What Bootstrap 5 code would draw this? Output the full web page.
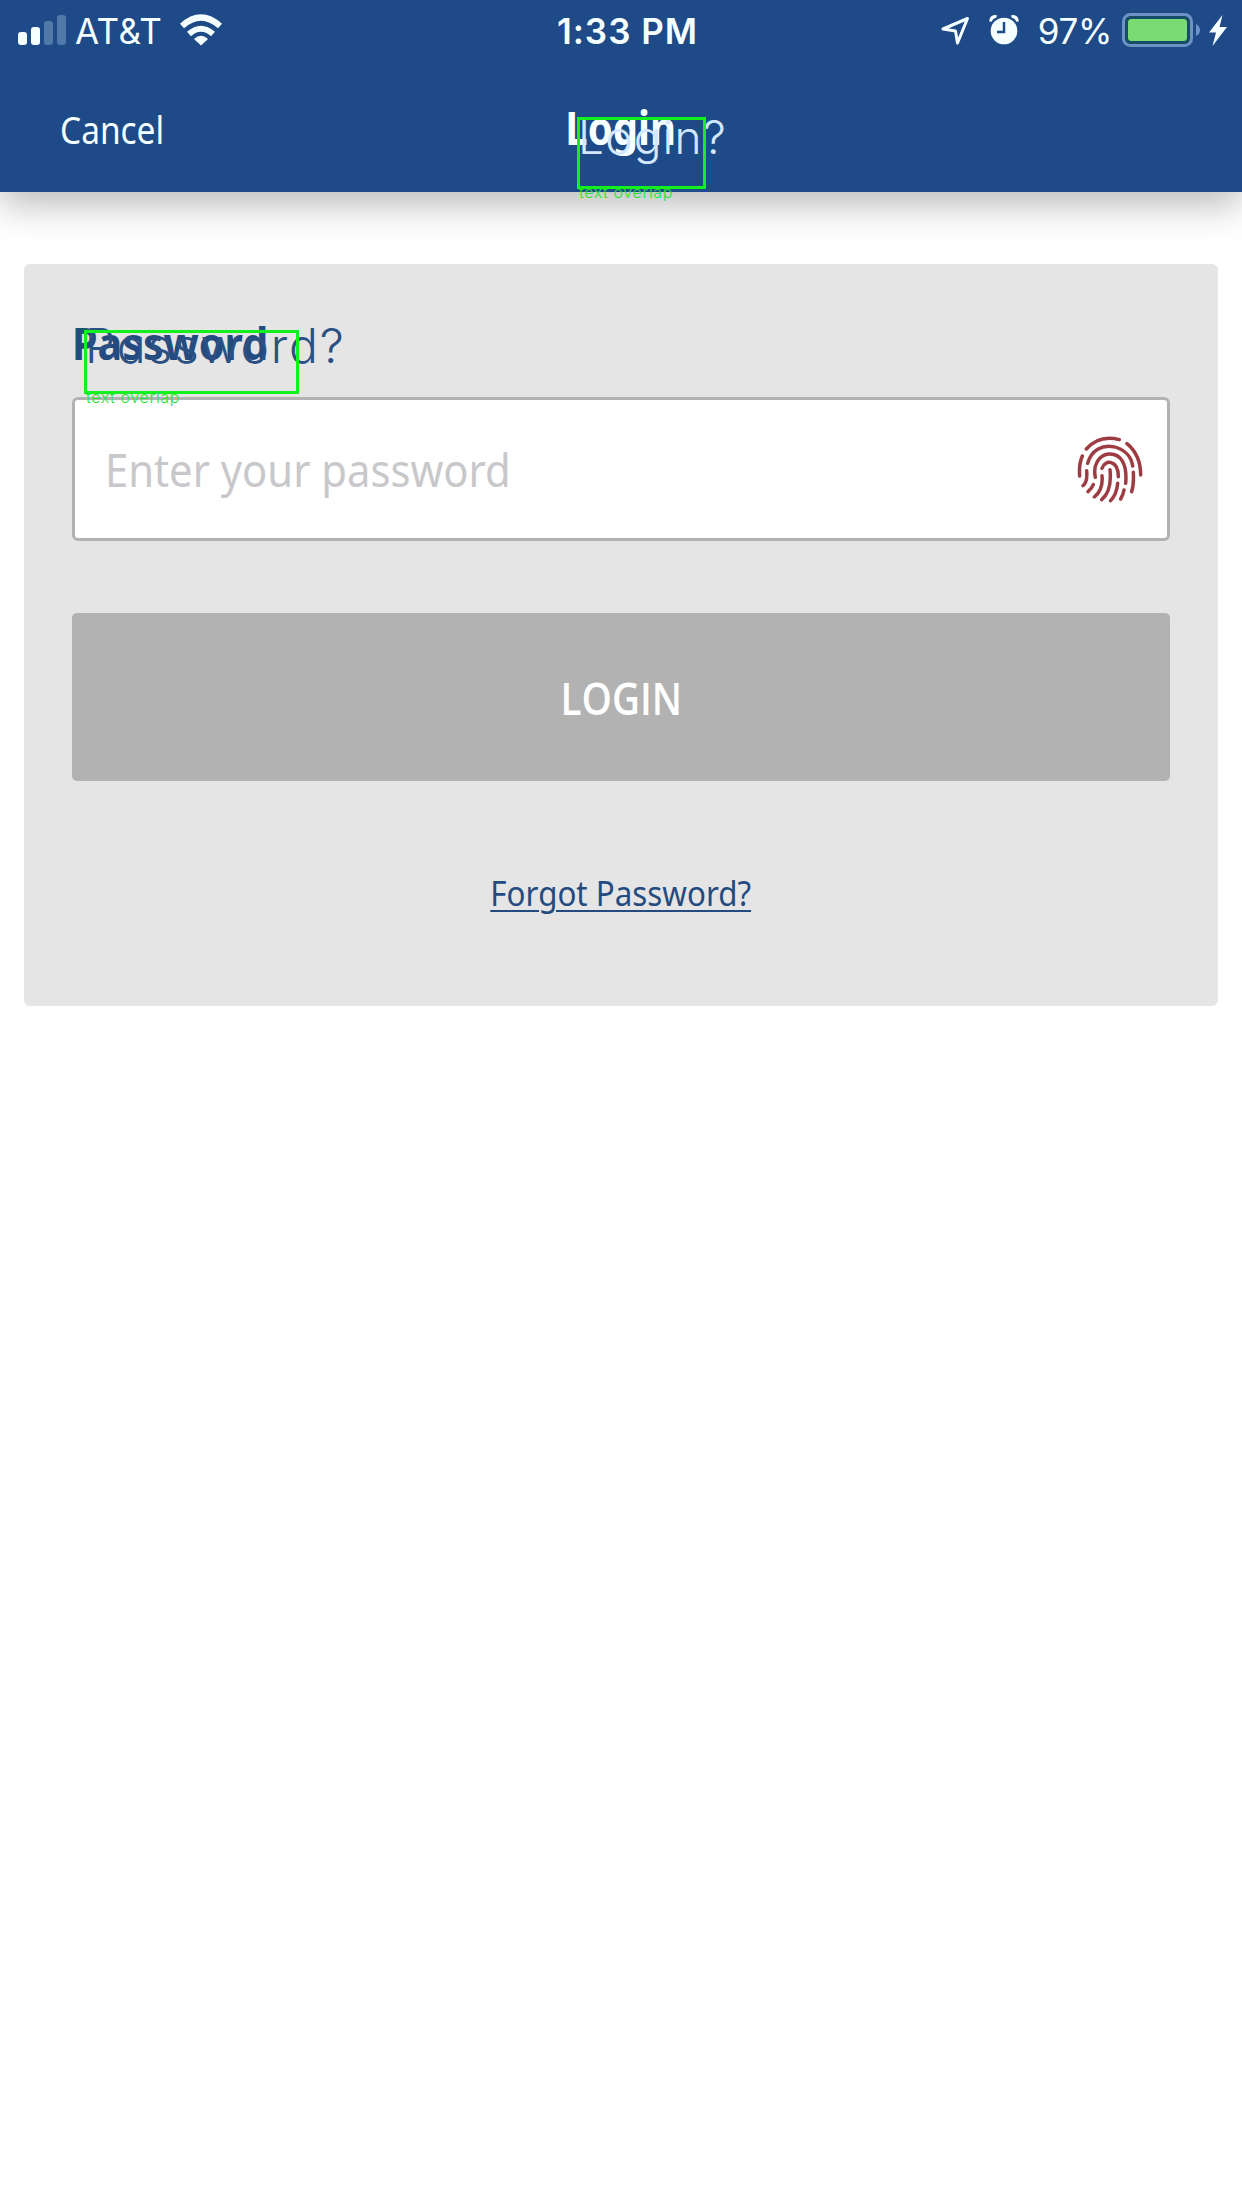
<!DOCTYPE html>
<html lang="en">
<head>
<meta charset="utf-8">
<meta name="viewport" content="width=device-width, initial-scale=1">
<title>Login</title>
<link href="https://cdn.jsdelivr.net/npm/bootstrap@5.3.0/dist/css/bootstrap.min.css" rel="stylesheet">
<style>
body{font-family:"Noto Sans",sans-serif;background:#fff;min-height:2208px;overflow-x:hidden}
.app-head{height:192px;background:#1e4a87;color:#f5ffff;box-shadow:0 12px 36px rgba(0,0,0,.28)}
.status{height:62px;font-family:Inter,sans-serif;font-size:35px;line-height:62px;padding:0 14px 0 17px}
.side{flex:1 1 0}
.carrier{margin:0 17px 0 8px;letter-spacing:.4px}
.pct{margin:0 10px 0 18px;letter-spacing:-.3px}
.clock{font-weight:600;letter-spacing:1px;margin:0 -5px 0 5px}
.titlebar{height:130px;line-height:130px}
.squeeze{display:inline-block;white-space:nowrap}
.cancel{font-size:38px;padding:2px 0 0 60px;transform:scaleX(.88);transform-origin:60px 50%}
.page-title{font-size:46px;font-weight:700;transform:scaleX(.87)}
.panel{margin:72px 24px 0;height:742px;padding:48px;background:#e5e5e5;border:0;border-radius:6px}
.field-label{height:61px;line-height:61px;font-size:45px;font-weight:700;color:#244b80;margin-bottom:24px;transform:scaleX(.915);transform-origin:0 50%}
.pass-field{height:144px;border:3px solid #b2b2b2;border-radius:6px;padding:0 21px 0 30px;background:#fff}
.hint{font-size:46px;color:#c8c8cb;transform:scaleX(.908);transform-origin:0 50%}
.login-btn{margin-top:72px;height:168px;background:#b2b2b2;color:#fff;border:0;border-radius:5px;font:600 46px "Open Sans",sans-serif}
.login-btn span{transform:scaleX(.84)}
.forgot{margin-top:82px;height:60px;line-height:60px;font-size:35px;color:#244b80;transform:scaleX(.895);text-underline-offset:4px;text-decoration-thickness:2px}
.ghost,.flag{position:absolute;z-index:5;white-space:nowrap}
.ghost{font-family:Inter,sans-serif;font-weight:300;font-feature-settings:"cv11","ss03";line-height:60px}
.ghost-title{left:578px;top:107px;font-size:46px;color:#d3e7ff;letter-spacing:1.2px}
.ghost-label{left:85px;top:316px;font-size:48px;color:#2b5083;letter-spacing:1.8px}
.flag{border:3px solid #13f01d}
.flag span{position:absolute;left:-1px;top:100%;margin-top:-3px;font:300 16px/18px Inter,sans-serif;color:#22e52b;letter-spacing:.6px}
.flag-title{left:577px;top:117px;width:129px;height:72px}
.flag-label{left:84px;top:330px;width:215px;height:64px}
</style>
<script src="https://cdn.jsdelivr.net/npm/bootstrap@5.3.0/dist/js/bootstrap.bundle.min.js"></script>
</head>
<body>
<header class="app-head position-relative">
  <div class="status d-flex">
    <div class="side d-flex align-items-center">
      <svg width="50" height="62" viewBox="17 0 50 62" fill="#f5ffff"><rect x="18" y="32" width="9" height="13" rx="3"/><rect x="31" y="27" width="9" height="18" rx="3"/><g fill="#5079a9"><rect x="44" y="21" width="9" height="24" rx="3"/><rect x="57" y="15" width="9" height="30" rx="3"/></g></svg>
      <span class="carrier">AT&amp;T</span>
      <svg width="44" height="62" viewBox="179 0 44 62" fill="none" stroke="#f5ffff" stroke-width="6"><path d="M182 26Q201 9 220 26M189 34Q201 23.500 213 34"/><path fill="#f5ffff" stroke="none" d="M194 39Q201 32.500 208 39L201 45.500Z"/></svg>
    </div>
    <span class="clock">1:33 PM</span>
    <div class="side d-flex align-items-center justify-content-end">
      <svg width="80" height="62" viewBox="942 0 80 62"><path d="M945 29L969.500 18.500L959.500 43L957.500 31Z" fill="none" stroke="#f5ffff" stroke-width="3" stroke-linejoin="round"/><circle cx="1006" cy="31" r="13.300" fill="#f5ffff"/><path d="M992.500 21.500Q993 16 998.500 16.500M1013.500 16.500Q1019 16 1019.500 21.500" stroke="#f5ffff" stroke-width="3" fill="#f5ffff"/><path d="M1006 22V32H999" fill="none" stroke="#1e4a87" stroke-width="2.500"/></svg>
      <span class="pct">97%</span>
      <svg width="106" height="62" viewBox="1122 0 106 62"><rect x="1123.500" y="14.500" width="68" height="31" rx="7" fill="#174d65" stroke="#6f92c6" stroke-width="3"/><rect x="1128" y="19" width="59" height="22" rx="3.500" fill="#7ada74"/><path d="M1196 24Q1200 26 1200 30T1196 36Z" fill="#6f92c6"/><path d="M1222.500 15L1209 32.500H1216L1212.500 46L1227 27H1219.500Z" fill="#f5ffff"/></svg>
    </div>
  </div>
  <nav class="titlebar d-flex">
    <div class="side"><span class="squeeze cancel">Cancel</span></div>
    <span class="squeeze page-title">Login</span>
    <div class="side"></div>
  </nav>
  <span class="ghost ghost-title">Login?</span>
  <div class="flag flag-title"><span>text overlap</span></div>
</header>
<main>
  <section class="panel card">
    <div><span class="squeeze field-label">Password</span></div>
    <div class="pass-field form-control d-flex align-items-center flex-shrink-0">
      <span class="squeeze hint">Enter your password</span>
      <svg class="ms-auto flex-shrink-0" width="70" height="70" viewBox="78 71 210 210" fill="none" stroke="#9d3d43" stroke-width="10.500" stroke-linecap="round"><path d="M109 116Q148 72 208 88M231 100Q272 134 272 194M97 137Q86 162 89 197M113 159C124 119 157 103 190 109C225 117 244 140 248 167M136 201C128 164 147 134 176 131C215 129 232 164 227 219M156 174C164 147 205 147 205 199M250 186Q252 222 245 244M110 181Q113 215 99 226M130 223Q125 235 114 244M156 196C159 225 149 247 133 260M180 178C184 218 177 250 155 268M203 219Q200 252 182 271M222 239Q219 255 212 266"/></svg>
    </div>
    <button class="login-btn btn d-flex align-items-center justify-content-center flex-shrink-0" type="button"><span class="squeeze">LOGIN</span></button>
    <div class="text-center"><a href="#" class="squeeze forgot">Forgot Password?</a></div>
  </section>
</main>
<span class="ghost ghost-label">Password?</span>
<div class="flag flag-label"><span>text overlap</span></div>
</body>
</html>
